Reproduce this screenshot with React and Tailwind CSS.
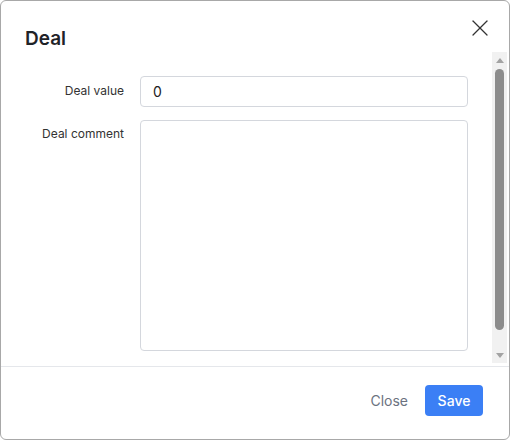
import React from "react";
import { X } from "lucide-react";

function Scrollbar() {
  return (
    <div className="w-[15px] h-[311px] shrink-0 bg-[#f1f1f1] flex flex-col items-center">
      <div className="h-[17px] flex items-start justify-center pt-[6px]">
        <svg width="8" height="5" viewBox="0 0 8 5">
          <path d="M4 0 L8 5 L0 5 Z" fill="#a3a3a3" />
        </svg>
      </div>
      <div className="w-[9px] h-[261px] rounded-full bg-[#8c8c8c]" />
      <div className="flex-1 flex items-end justify-center pb-[5px]">
        <svg width="8" height="5" viewBox="0 0 8 5">
          <path d="M0 0 L8 0 L4 5 Z" fill="#a3a3a3" />
        </svg>
      </div>
    </div>
  );
}

function App() {
  return (
    <div
      className="w-[511px] h-[441px] bg-white"
      style={{ fontFamily: "Inter, 'Noto Sans', sans-serif" }}
    >
      <div className="w-[510px] h-[440px] border border-[#a8a8a8] rounded-md bg-white flex flex-col overflow-hidden">
        {/* Header */}
        <div className="h-[51px] flex items-start justify-between pl-6 pr-[15px] shrink-0">
          <h2 className="mt-[26px] text-[19px] leading-6 font-semibold text-[#1f2328]">
            Deal
          </h2>
          <button className="mt-[13px] text-[#333]">
            <X size={28} strokeWidth={1.1} />
          </button>
        </div>

        {/* Body */}
        <div className="h-[314px] shrink-0 flex">
          <div className="flex-1 overflow-hidden pl-6 pr-6 pt-[24px]">
            <div className="flex flex-col gap-[13px]">
              <div className="flex gap-4">
                <label className="w-[99px] shrink-0 text-right text-[12px] leading-5 text-[#333] pt-[5px]">
                  Deal value
                </label>
                <input
                  defaultValue="0"
                  className="flex-1 h-[31px] border border-[#d4d7dd] rounded-[4px] px-3 text-[14px] text-[#222] outline-none"
                />
              </div>
              <div className="flex gap-4">
                <label className="w-[99px] shrink-0 text-right text-[12px] leading-5 text-[#333] pt-[4px]">
                  Deal comment
                </label>
                <textarea className="flex-1 h-[231px] border border-[#d4d7dd] rounded-[4px] px-3 py-2 text-[14px] outline-none resize-none" />
              </div>
            </div>
          </div>
          <Scrollbar />
          <div className="w-[2px] shrink-0" />
        </div>

        {/* Footer */}
        <div className="flex-1 border-t border-[#e5e7eb] flex items-center justify-end gap-[9px] pr-[26px] pb-[6px]">
          <button className="px-2 h-[31px] text-[14px] text-[#6b7280]">Close</button>
          <button className="w-[58px] h-[31px] rounded-[4px] bg-[#3b7ff5] text-white text-[14px] font-medium">
            Save
          </button>
        </div>
      </div>
    </div>
  );
}

export default App;
